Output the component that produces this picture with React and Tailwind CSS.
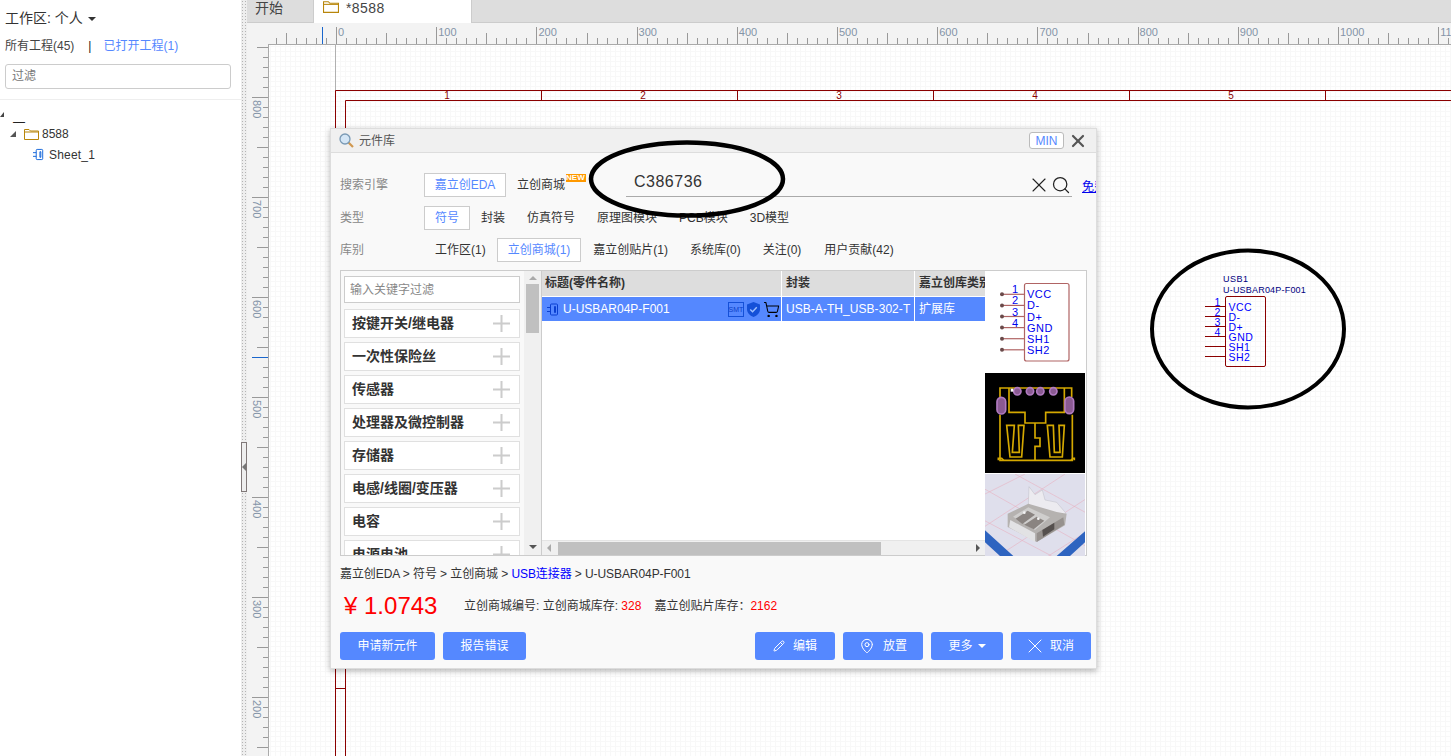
import React from 'react';
import { X, Search, MapPin, Pencil, ShoppingCart } from 'lucide-react';

const font = 'font-["Liberation_Sans","Noto_Sans_CJK_SC",sans-serif]';

const categories = [
  '按键开关/继电器',
  '一次性保险丝',
  '传感器',
  '处理器及微控制器',
  '存储器',
  '电感/线圈/变压器',
  '电容',
  '电源电池',
];

const pins = ['VCC', 'D-', 'D+', 'GND', 'SH1', 'SH2'];

function FolderIcon({ className }) {
  return (
    <svg viewBox="0 0 15 12" className={className} fill="none" stroke="#b8860b" strokeWidth="1">
      <path d="M.5 11.5V1.5H5L6.5 3H14.5V11.5Z" />
      <path d="M.5 4H14.5" />
    </svg>
  );
}

function ChipIcon({ className, color = '#0a5fd8' }) {
  return (
    <svg viewBox="0 0 13 13" className={className} fill="none" stroke={color} strokeWidth="1">
      <rect x="3.5" y="1" width="7" height="11" rx="1" />
      <path d="M7.5 3.5h1v6h-1zM0 4.5h3.5M0 8.5h3.5" />
    </svg>
  );
}

function HRuler() {
  const ticks = [];
  for (let i = -6; i < 112; i++) {
    const x = Math.round(336 + i * 10.02) + 0.5;
    const top = i % 10 === 0 ? 27 : i % 5 === 0 ? 33 : 38;
    ticks.push(<line key={i} x1={x} x2={x} y1={top} y2="44" stroke="#999" />);
  }
  const labels = [0, 100, 200, 300, 400, 500, 600, 700, 800, 900, 1000, 1100];
  return (
    <svg viewBox="247 23 1204 21" className="block h-[21px] w-[1204px] bg-[#f3f3f3]">
      {ticks}
      <line x1="322.5" x2="322.5" y1="27" y2="44" stroke="#1a66cc" />
      {labels.map((n) => (
        <text key={n} x={338 + n * 1.002} y="36" fontSize="11" fill="#8494a8" fontFamily="Liberation Sans">
          {n}
        </text>
      ))}
    </svg>
  );
}

function VRuler() {
  const ticks = [];
  for (let i = 0; i < 72; i++) {
    const y = 47 + i * 10 + 0.5;
    const left = (i + 5) % 10 === 0 ? 252 : (i + 5) % 5 === 0 ? 257 : 263;
    ticks.push(<line key={i} x1={left} x2="268" y1={y} y2={y} stroke="#999" />);
  }
  const labels = [800, 700, 600, 500, 400, 300, 200];
  return (
    <svg viewBox="247 44 21 712" className="block h-[712px] w-[21px] shrink-0 bg-[#f3f3f3]">
      {ticks}
      <line x1="252" x2="268" y1="357.5" y2="357.5" stroke="#1a66cc" />
      {labels.map((n) => {
        const y = 100 + (800 - n);
        return (
          <text
            key={n}
            transform={`translate(253 ${y}) rotate(90)`}
            fontSize="11"
            fill="#8494a8"
            fontFamily="Liberation Sans"
          >
            {n}
          </text>
        );
      })}
    </svg>
  );
}

function Sheet() {
  const dark = '#8b0000';
  const div = [541, 737, 933, 1129, 1325];
  const nums = [447, 643, 839, 1035, 1231];
  return (
    <svg viewBox="268 44 1183 712" className="block h-[712px] w-[1183px] bg-white">
      <defs>
        <pattern id="grid" x="268" y="44" width="10" height="10" patternUnits="userSpaceOnUse">
          <path d="M2.5 0V10M7.5 0V10M0 2.5H10M0 7.5H10" stroke="#f8f8f8" strokeWidth="1" />
        </pattern>
      </defs>
      <rect x="268" y="44" width="1183" height="712" fill="url(#grid)" />
      <path d="M268.5 44V756M268 44.5H1451" stroke="#aaa" fill="none" />
      <path d="M335.5 44V91" stroke="#b0b0b0" />
      <path d="M335.5 756V90.5H1451M345.5 756V100.5H1451M336 688.5H345" stroke={dark} fill="none" />
      {div.map((x) => (
        <path key={x} d={`M${x + 0.5} 90V100`} stroke={dark} />
      ))}
      {nums.map((x, i) => (
        <text key={x} x={x} y="99" fontSize="10" fill={dark} textAnchor="middle" fontFamily="Liberation Sans">
          {i + 1}
        </text>
      ))}

      <text x="1223" y="282" fontSize="9" letterSpacing=".5" fill="#000080" fontFamily="Liberation Sans">USB1</text>
      <text x="1223" y="292.5" fontSize="9" letterSpacing=".2" fill="#000080" fontFamily="Liberation Sans">U-USBAR04P-F001</text>
      <rect x="1225.5" y="296.5" width="40" height="70" rx="1.5" fill="none" stroke={dark} />
      {pins.map((p, i) => (
        <g key={p}>
          <line x1="1205" x2="1225" y1={306.5 + i * 10} y2={306.5 + i * 10} stroke={dark} />
          <text x="1228.5" y={310.5 + i * 10} fontSize="10.5" letterSpacing=".5" fill="#0000ff" fontFamily="Liberation Sans">
            {p}
          </text>
          {i < 4 && (
            <text x="1214.5" y={306 + i * 10} fontSize="10.5" fill="#0000ff" fontFamily="Liberation Sans">
              {i + 1}
            </text>
          )}
        </g>
      ))}
      <ellipse cx="1248" cy="329" rx="96" ry="78.5" fill="none" stroke="#000" strokeWidth="4" />
    </svg>
  );
}

function SymbolPreview() {
  const c = '#b06464';
  return (
    <svg viewBox="0 0 100 101" className="block h-[101px] w-[100px] bg-white">
      <rect x="39.5" y="12.5" width="44.5" height="77.5" rx="2" fill="none" stroke={c} strokeWidth="1.2" />
      {pins.map((p, i) => {
        const y = 23.3 + i * 11.1;
        return (
          <g key={p}>
            <line x1="17" x2="39" y1={y} y2={y} stroke={c} strokeWidth="1.2" />
            <circle cx="17" cy={y} r="2" fill="#6a4a4a" />
            <text x="42" y={y + 4} fontSize="11" letterSpacing=".5" fill="#0000ee" fontFamily="Liberation Sans">
              {p}
            </text>
            {i < 4 && (
              <text x="27" y={y - 1} fontSize="11" fill="#0000ee" fontFamily="Liberation Sans">
                {i + 1}
              </text>
            )}
          </g>
        );
      })}
    </svg>
  );
}

function PcbPreview() {
  const y = '#d4a800';
  const pad = { fill: '#8a5a92', stroke: '#b07ac0', strokeWidth: 5 };
  return (
    <svg viewBox="0 0 300 300" className="block h-[100px] w-[100px] bg-black">
      <g fill="none" stroke={y} strokeWidth="5">
        <path d="M45 72V45H260V72M45 125V262H262V125" />
        <path d="M72 45V118H120V150H182V118H238V45" />
        <path d="M150 150V195H165V220H150V262" />
        <path d="M65 157H88L82 238H103L100 157H117L110 252H75Z" />
        <path d="M187 157H205L208 238H225L222 157H238L232 252H195Z" />
        <path d="M40 262V256H50L56 262M258 262L264 256H268V262" />
      </g>
      {[97, 135, 166, 205].map((x) => (
        <circle key={x} cx={x} cy="55" r="11" {...pad} />
      ))}
      <rect x="36" y="73" width="26" height="50" rx="13" {...pad} />
      <rect x="240" y="72" width="26" height="50" rx="13" {...pad} />
      <rect x="77" y="47" width="8" height="9" fill="#fff" />
    </svg>
  );
}

function PhotoPreview() {
  return (
    <svg viewBox="0 0 300 246" className="block h-[82px] w-[100px]">
      <rect width="300" height="246" fill="#dfdfec" />
      <g stroke="#e8a8b8" strokeWidth="1.5">
        <path d="M-20 70L120 0M-20 170L240 0M40 246L310 70M190 246L310 170" />
        <path d="M90 0L310 120M-10 40L300 215M-20 130L200 246" />
      </g>
      <path d="M0 169L85 246H45L0 205ZM300 172V205L255 246H215Z" fill="#2e64c0" />
      <path d="M132 38L150 62L172 48L180 78L215 85L243 118L215 132L160 112L130 90Z" fill="#ecebf0" stroke="#aaaab2" />
      <path d="M68 119L130 89L215 114L245 119L240 154L155 204L68 159Z" fill="#b5b2b0" />
      <path d="M84 128L130 100L195 130L150 168Z" fill="#cfcecd" />
      <path d="M92 134L128 110L150 122L112 150ZM118 152L155 128L178 140L146 166Z" fill="#8a8481" />
      <path d="M76 138L150 178V204L72 160Z" fill="#e2e2e4" />
      <path d="M155 178L235 130L238 152L155 204Z" fill="#96918e" />
      <path d="M172 168L208 146V166L174 188Z" fill="#55504e" />
      <circle cx="118" cy="116" r="4" fill="#f4f4f4" />
      <circle cx="160" cy="134" r="4" fill="#f4f4f4" />
    </svg>
  );
}

function PlusMark() {
  return (
    <svg viewBox="0 0 17 17" className="h-[17px] w-[17px] shrink-0" stroke="#ccc" strokeWidth="2">
      <path d="M8.5 0V17M0 8.5H17" />
    </svg>
  );
}

function Tab({ active, className = '', children }) {
  return (
    <span
      className={
        active
          ? `shrink-0 whitespace-nowrap border border-[#ccc] bg-white px-[10px] text-center text-[12px] leading-[22px] text-[#5588ff] ${className}`
          : `shrink-0 whitespace-nowrap border border-transparent px-[10px] text-[12px] leading-[22px] text-[#333] ${className}`
      }
    >
      {children}
    </span>
  );
}

function Btn({ icon, className, children }) {
  return (
    <button className={`flex h-[28px] shrink-0 items-center justify-center gap-[8px] rounded-[3px] bg-[#5588ff] text-[12px] text-white ${className}`}>
      {icon}
      {children}
    </button>
  );
}

function Dialog() {
  return (
    <div className="absolute left-[330px] top-[128px] h-[541px] w-[767px] overflow-hidden border border-[#ddd] bg-[#f9f9f9] shadow-[0_2px_6px_rgba(0,0,0,0.3)]">
      {/* Header */}
      <div className="flex h-[24px] items-center border-b border-[#ddd] bg-[#f0f0f0] pl-[8px] pr-[11px]">
        <svg viewBox="0 0 15 15" className="h-[15px] w-[15px]">
          <path d="M9 9L14 14" stroke="#d09850" strokeWidth="2.2" />
          <circle cx="6" cy="6" r="5" fill="#d4e6f6" stroke="#7a9ab5" strokeWidth="1.3" />
        </svg>
        <span className="ml-[5px] flex-1 text-[12px] text-[#555]">元件库</span>
        <span className="mr-[7px] flex h-[17px] w-[35px] items-center justify-center rounded-[3px] border border-[#bbb] bg-white text-[12px] text-[#5588ff]">
          MIN
        </span>
        <X className="-mx-[3px] h-[20px] w-[20px] text-[#555]" strokeWidth={2.6} />
      </div>

      <div className="px-[9px] pt-[20px]">
        {/* Search engine */}
        <div className="flex h-[24px] items-center">
          <span className="w-[84px] shrink-0 text-[12px] text-[#888]">搜索引擎</span>
          <Tab active className="w-[82px] !px-0">嘉立创EDA</Tab>
          <Tab>立创商城</Tab>
          <span className="mb-[14px] ml-[-10px] w-[20px] shrink-0 bg-[#ff9900] text-[8px] font-bold leading-[8px] text-white">NEW</span>
          <div className="ml-[40px] flex h-[24px] w-[446px] shrink-0 items-center border-b border-[#aaa] pl-[8px]">
            <span className="flex-1 pb-[5px] text-[16px] tracking-[0.5px] text-[#333]">C386736</span>
            <X className="h-[24px] w-[24px] text-[#222]" strokeWidth={1.1} />
            <Search className="mr-[1px] h-[20px] w-[20px] text-[#222]" strokeWidth={1.5} />
          </div>
          <span className="ml-[10px] mt-[3px] shrink-0 whitespace-nowrap text-[12px] text-[#0000ee] underline">免费</span>
        </div>

        {/* Type */}
        <div className="mt-[9px] flex h-[24px] items-center">
          <span className="w-[84px] shrink-0 text-[12px] text-[#888]">类型</span>
          <Tab active>符号</Tab>
          <Tab>封装</Tab>
          <Tab>仿真符号</Tab>
          <Tab>原理图模块</Tab>
          <Tab>PCB模块</Tab>
          <Tab>3D模型</Tab>
        </div>

        {/* Library */}
        <div className="mt-[8px] flex h-[24px] items-center">
          <span className="w-[84px] shrink-0 text-[12px] text-[#888]">库别</span>
          <Tab>工作区(1)</Tab>
          <Tab active>立创商城(1)</Tab>
          <Tab className="ml-[1px]">嘉立创贴片(1)</Tab>
          <Tab>系统库(0)</Tab>
          <Tab>关注(0)</Tab>
          <Tab className="ml-[1px]">用户贡献(42)</Tab>
        </div>

        {/* Panel */}
        <div className="mt-[8px] flex h-[286px] w-[747px] border border-[#ccc] bg-white">
          <div className="w-[183px] shrink-0 overflow-hidden bg-[#f9f9f9] pl-[3px] pr-[4px] pt-[5px]">
            <div className="h-[27px] border border-[#ccc] bg-white pl-[5px] text-[12px] leading-[26px] text-[#888]">
              输入关键字过滤
            </div>
            {categories.map((c, i) => (
              <div
                key={c}
                className={`flex h-[29px] items-center justify-between border border-[#e0e0e0] bg-white pl-[7px] pr-[9px] ${i === 0 ? 'mt-[6px]' : 'mt-[4px]'}`}
              >
                <span className="text-[14px] font-bold text-[#333]">{c}</span>
                <PlusMark />
              </div>
            ))}
          </div>

          {/* Vertical scrollbar */}
          <div className="flex w-[17px] shrink-0 flex-col items-center bg-[#f0f0f0] pt-[5px]">
            <div className="h-0 w-0 border-x-[4px] border-b-[4px] border-x-transparent border-b-[#aaa]" />
            <div className="mt-[4px] h-[49px] w-[13px] bg-[#c0c0c0]" />
            <div className="mb-[6px] mt-auto h-0 w-0 border-x-[4px] border-t-[4px] border-x-transparent border-t-[#555]" />
          </div>

          {/* Table */}
          <div className="relative w-[444px] shrink-0 border-l border-[#ccc] bg-white">
            <div className="flex h-[25px] bg-[#ddd] text-[12px] font-bold leading-[25px] text-[#333]">
              <div className="w-[239px] shrink-0 pl-[3px]">标题(零件名称)</div>
              <div className="w-[133px] shrink-0 border-l border-white pl-[4px]">封装</div>
              <div className="flex-1 overflow-hidden whitespace-nowrap border-l border-white pl-[4px]">嘉立创库类别</div>
            </div>
            <div className="mt-[1px] flex h-[24px] bg-[#5588ff] text-[12px] leading-[24px] text-white">
              <div className="flex w-[239px] shrink-0 items-center pl-[5px] pr-[1px]">
                <ChipIcon className="h-[13px] w-[13px]" color="#0a3fd0" />
                <span className="ml-[3px] flex-1">U-USBAR04P-F001</span>
                <span className="flex h-[15px] w-[16px] items-center justify-center border border-[#1450d8] text-[7px] leading-none text-[#0c40c8]">SMT</span>
                <svg viewBox="0 0 14 16" className="ml-[3px] h-[15px] w-[13px]">
                  <path d="M7 0L14 2.5V8C14 12 10 15 7 16 4 15 0 12 0 8V2.5Z" fill="#1450d8" />
                  <path d="M3.5 8L6 10.5 10.5 5.5" fill="none" stroke="#9fc0ff" strokeWidth="1.5" />
                </svg>
                <ShoppingCart className="ml-[3px] h-[17px] w-[17px] text-black" strokeWidth={1.5} />
              </div>
              <div className="w-[133px] shrink-0 overflow-hidden whitespace-nowrap border-l border-white pl-[4px] tracking-[0.05px]">USB-A-TH_USB-302-T</div>
              <div className="flex-1 border-l border-white pl-[4px]">扩展库</div>
            </div>
            {/* Horizontal scrollbar */}
            <div className="absolute bottom-0 left-0 flex h-[15px] w-full items-center border-t border-[#e4e4e4] bg-[#f0f0f0]">
              <div className="ml-[5px] h-0 w-0 border-y-[4px] border-r-[4px] border-y-transparent border-r-[#aaa]" />
              <div className="ml-[7px] h-[13px] w-[323px] bg-[#c0c0c0]" />
              <div className="ml-auto mr-[5px] h-0 w-0 border-y-[4px] border-l-[4px] border-y-transparent border-l-[#555]" />
            </div>
          </div>

          {/* Previews */}
          <div className="w-[100px] shrink-0">
            <SymbolPreview />
            <div className="h-[1px] bg-white" />
            <PcbPreview />
            <div className="h-[1px] bg-white" />
            <PhotoPreview />
          </div>
        </div>

        <div className="mt-[10px] whitespace-nowrap text-[12px] leading-[17px] tracking-[-0.08px] text-[#333]">
          嘉立创EDA &gt; 符号 &gt; 立创商城 &gt; <span className="text-[#0000ff]">USB连接器</span> &gt; U-USBAR04P-F001
        </div>

        <div className="mt-[8px] flex h-[30px] items-center pl-[4px]">
          <span className="w-[120px] text-[24px] leading-[30px] text-[#ff0000]">¥ 1.0743</span>
          <span className="text-[12px] text-[#333]">
            立创商城编号: 立创商城库存: <span className="text-[#ff0000]">328</span>
          </span>
          <span className="ml-[13px] text-[12px] text-[#333]">
            嘉立创贴片库存：<span className="text-[#ff0000]">2162</span>
          </span>
        </div>

        <div className="mt-[11px] flex gap-[8px]">
          <Btn className="w-[95px]">申请新元件</Btn>
          <Btn className="w-[83px]">报告错误</Btn>
          <Btn className="ml-[221px] w-[80px]" icon={<Pencil className="h-[12px] w-[12px]" />}>编辑</Btn>
          <Btn className="w-[80px]" icon={<MapPin className="h-[16px] w-[16px]" strokeWidth={1.5} />}>放置</Btn>
          <Btn className="w-[72px]">
            <span className="-mr-[3px]">更多</span>
            <span className="h-0 w-0 border-x-[4px] border-t-[4px] border-x-transparent border-t-white" />
          </Btn>
          <Btn className="w-[80px]" icon={<X className="-mx-[5px] h-[24px] w-[24px]" strokeWidth={1} />}>取消</Btn>
        </div>
      </div>

      {/* Hand-drawn circle round the search box */}
      <svg viewBox="0 0 200 80" className="absolute left-[257px] top-[11px] h-[80px] w-[200px]">
        <ellipse cx="99" cy="39" rx="96" ry="36.5" fill="none" stroke="#000" strokeWidth="4.5" />
      </svg>
    </div>
  );
}

export default function App() {
  return (
    <div className={`relative flex h-[756px] w-[1451px] overflow-hidden bg-white ${font}`}>
      {/* Sidebar */}
      <aside className="w-[241px] shrink-0 bg-white">
        <div className="flex h-[36px] items-center pl-[5px] pt-[1px] text-[14px] text-[#333]">
          工作区: 个人
          <span className="ml-[5px] h-0 w-0 border-x-[4px] border-t-[4px] border-x-transparent border-t-[#333]" />
        </div>
        <div className="flex h-[20px] items-center pl-[5px] text-[12px] text-[#444]">
          <span>所有工程(45)</span>
          <span className="ml-[14px] text-[#222]">|</span>
          <span className="ml-[12px] text-[#5588ff]">已打开工程(1)</span>
        </div>
        <div className="ml-[5px] mt-[8px] h-[25px] w-[226px] rounded-[3px] border border-[#ccc] pl-[6px] text-[12px] leading-[23px] text-[#777]">
          过滤
        </div>
        <div className="mt-[10px] h-[1px] bg-[#eee]" />
        <div className="pt-[4px] text-[12px] text-[#333]">
          <div className="flex h-[20px] items-center">
            <span className="h-0 w-0 border-b-[5px] border-l-[4px] border-b-[#444] border-l-transparent" />
            <span className="ml-[9px] mt-[16px] text-[#222]">—</span>
          </div>
          <div className="flex h-[20px] items-center pl-[10px]">
            <span className="h-0 w-0 border-b-[6px] border-l-[6px] border-b-[#555] border-l-transparent" />
            <FolderIcon className="ml-[8px] h-[12px] w-[15px]" />
            <span className="ml-[3px]">8588</span>
          </div>
          <div className="flex h-[20px] items-center pl-[33px] pt-[1px]">
            <ChipIcon className="h-[13px] w-[12px]" />
            <span className="ml-[4px] tracking-[0.2px]">Sheet_1</span>
          </div>
        </div>
      </aside>

      {/* Splitter */}
      <div className="relative w-[6px] shrink-0 bg-[#eee] bg-[radial-gradient(#b4b4b4_0.7px,transparent_0.8px)] bg-[size:3px_3px]">
        <div className="absolute left-0 top-[442px] flex h-[50px] w-[6px] items-center border border-[#807878] bg-[#eee]">
          <span className="h-0 w-0 border-y-[4px] border-r-[4px] border-y-transparent border-r-[#777]" />
        </div>
      </div>

      {/* Editor */}
      <main className="flex min-w-0 flex-1 flex-col">
        <div className="flex h-[23px] shrink-0 border-b border-[#ccc] bg-[#ddd] text-[14px] text-[#444]">
          <div className="w-[66px] pl-[8px] leading-[16px]">开始</div>
          <div className="flex h-[23px] w-[159px] items-start overflow-hidden border-x border-[#ccc] bg-white pl-[9px]">
            <FolderIcon className="-mt-[1px] h-[15px] w-[16px]" />
            <span className="ml-[7px] leading-[16px] tracking-[0.4px]">*8588</span>
          </div>
        </div>
        <HRuler />
        <div className="flex flex-1">
          <VRuler />
          <Sheet />
        </div>
      </main>

      <Dialog />
    </div>
  );
}
